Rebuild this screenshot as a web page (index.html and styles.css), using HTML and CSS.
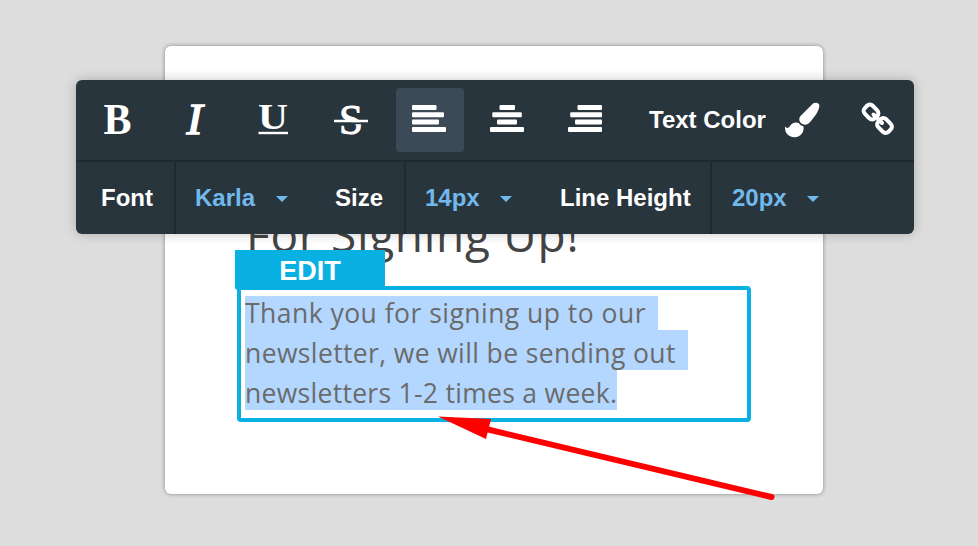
FILE: index.html
```html
<!DOCTYPE html>
<html lang="en">
<head>
<meta charset="utf-8">
<title>Text editor</title>
<link rel="stylesheet" href="styles.css">
</head>
<body>
<main class="card">
  <h1 class="heading">For Signing Up!</h1>
  <div class="block">
    <span class="badge">EDIT</span>
    <p class="copy">
      <span class="line first">Thank you for signing up to our </span>
      <span class="line second">newsletter, we will be sending out </span>
      <span class="line third">newsletters 1-2 times a week.</span>
    </p>
  </div>
</main>
<div class="toolbar">
  <div class="row tools">
    <svg class="letters" width="320" height="80" viewBox="76 80 320 80">
      <g class="glyph">
        <text class="bold" x="103.500" y="134" textLength="28" lengthAdjust="spacingAndGlyphs">B</text>
        <text class="italic" x="186.500" y="134" textLength="16" lengthAdjust="spacingAndGlyphs">I</text>
        <text class="under" x="258" y="129" textLength="30" lengthAdjust="spacingAndGlyphs">U</text>
        <text class="strike" x="339" y="133.500" textLength="24" lengthAdjust="spacingAndGlyphs">S</text>
      </g>
      <path class="bar" d="M258.500 133H288"/>
      <path class="gap" d="M334 123.200H362"/>
      <path class="bar" d="M334 121H368"/>
    </svg>
    <span class="tool active"><svg width="34" height="27"><rect width="24.500" height="5" rx="1"/><rect y="7.300" width="32" height="5" rx="1"/><rect y="14.600" width="27" height="5" rx="1"/><rect y="22" width="34" height="5" rx="1"/></svg></span>
    <span class="tool center"><svg width="34" height="27"><rect x="9.500" width="15.500" height="5" rx="1"/><rect x="2.300" y="7.300" width="29.500" height="5" rx="1"/><rect x="7" y="14.600" width="20" height="5" rx="1"/><rect y="22" width="34" height="5" rx="1"/></svg></span>
    <span class="tool right"><svg width="34" height="27"><rect x="9.500" width="24.500" height="5" rx="1"/><rect x="2.200" y="7.300" width="31.800" height="5" rx="1"/><rect x="7" y="14.600" width="27" height="5" rx="1"/><rect y="22" width="34" height="5" rx="1"/></svg></span>
    <span class="colorlabel">Text Color</span>
    <svg class="brush" width="36" height="36" viewBox="785 102 36 36">
      <path d="M814 103.600C816 102 821 102.300 820.300 106.500C820 109 818.500 112 817 114.500L812 121C809.500 124.500 805.500 125.800 802.500 123.500C800 121.500 799.500 118.500 801.500 116Z"/>
      <path d="M786 126C787 128.800 789.500 128.500 791 126C793 122.300 797 121.500 800 123.300C801 125.300 802.500 125.800 804.200 126C806 131 802 137.200 795.500 137.200C789 137.200 785.500 132.500 786 126Z"/>
    </svg>
    <svg class="link" width="34" height="34" viewBox="861 102 34 34">
      <g fill="none" stroke="#fff" stroke-width="4" stroke-linejoin="round" stroke-linecap="round">
        <rect x="-7.200" y="-5.600" width="14.400" height="11.200" rx="4" transform="translate(871 112)rotate(45)"/>
        <rect x="-7.200" y="-5.600" width="14.400" height="11.200" rx="4" transform="translate(884.500 125.500)rotate(45)"/>
        <path d="M873.500 114.500L882 123"/>
      </g>
    </svg>
  </div>
  <div class="row fields">
    <span class="cell font">Font</span>
    <span class="cell value karla">Karla<i class="caret"></i></span>
    <span class="cell size">Size</span>
    <span class="cell value px">14px<i class="caret"></i></span>
    <span class="cell height">Line Height</span>
    <span class="cell value last">20px<i class="caret"></i></span>
  </div>
</div>
<svg class="arrow" width="978" height="546" viewBox="0 0 978 546">
  <path d="M438 416.500L491 419L486 439Z"/>
  <path class="shaft" d="M486 429L771.500 497"/>
</svg>
</body>
</html>
```

FILE: styles.css
```css
* { box-sizing: border-box; }
body {
  margin: 0;
  width: 978px;
  height: 546px;
  overflow: hidden;
  position: relative;
  padding: 46px 0 0 165px;
  background: #ddd;
  font-family: "Liberation Sans", sans-serif;
}
.card {
  width: 658px;
  height: 448px;
  padding: 155px 72px 0;
  background: #fff;
  border-radius: 6px;
  box-shadow: 0 0 4px rgba(0, 0, 0, .4);
}
.heading {
  margin: 0 0 0 9px;
  height: 85px;
  font: 400 46px/66px "Open Sans", sans-serif;
  letter-spacing: .7px;
  color: #444;
  white-space: nowrap;
}
.block {
  position: relative;
  width: 514px;
  height: 136px;
  padding: 6px 4px;
  border: 4px solid #09b1e3;
  border-radius: 4px;
}
.badge {
  position: absolute;
  left: -6px;
  top: -40px;
  width: 150px;
  height: 40px;
  border-radius: 0 0 0 3px;
  background: #09b1e3;
  color: #fff;
  font-size: 27px;
  font-weight: 700;
  line-height: 42px;
  text-align: center;
}
.copy {
  margin: 0;
  font: 400 26.5px/46px "Open Sans", sans-serif;
  color: #6b6b6b;
}
.line { display: block; height: 40px; white-space: pre; background: #b3d7ff; }
.first { width: 412.500px; height: 34px; line-height: 34px; letter-spacing: .47px; }
.second { width: 442.500px; letter-spacing: .38px; }
.third { width: 372px; letter-spacing: .3px; }
.toolbar {
  position: absolute;
  left: 76px;
  top: 80px;
  width: 838px;
  height: 154px;
  border-radius: 6px;
  background: #29353d;
  box-shadow: 0 0 12px rgba(0, 0, 0, .22);
  color: #fff;
  font-size: 24px;
  font-weight: 700;
}
.row { display: flex; align-items: center; }
.tools { height: 80px; }
.fields { height: 74px; border-top: 2px solid #202a32; }
.glyph { font: 700 44px "Liberation Serif", serif; fill: #fff; }
.italic { font-style: italic; font-weight: 400; stroke: #fff; stroke-width: 1.4px; }
.under { font-size: 36px; }
.strike { font-size: 42px; font-weight: 400; stroke: #fff; stroke-width: 1px; }
.bar { stroke: #fff; stroke-width: 2.400px; }
.gap { stroke: #29353d; stroke-width: 2px; }
.tool {
  display: flex;
  justify-content: center;
  width: 68px;
  height: 64px;
  padding-top: 17px;
  border-radius: 4px;
  fill: #fff;
}
.active { background: #3b4a56; padding-right: 2px; }
.center { margin-left: 9px; }
.right { margin-left: 10px; }
.colorlabel { margin-left: 30px; width: 117px; white-space: nowrap; }
.brush { margin-left: 18px; fill: #fff; }
.link { margin-left: 41px; margin-top: -2px; }
.cell { height: 72px; line-height: 72px; white-space: nowrap; }
.font { width: 100px; padding-left: 25px; border-right: 2px solid #202a32; }
.value { display: flex; align-items: center; color: #71b9ed; }
.karla { width: 159px; padding-left: 19px; }
.size { width: 71px; border-right: 2px solid #202a32; }
.px { width: 154px; padding-left: 19px; }
.height { width: 152px; border-right: 2px solid #202a32; }
.last { padding-left: 20px; }
.caret {
  margin: 2px 0 0 20.500px;
  border: 6px solid transparent;
  border-top-color: #71b9ed;
  border-bottom: 0;
}
.arrow { position: absolute; inset: 0; fill: #f00; }
.shaft { stroke: #f00; stroke-width: 6px; stroke-linecap: round; }
```
